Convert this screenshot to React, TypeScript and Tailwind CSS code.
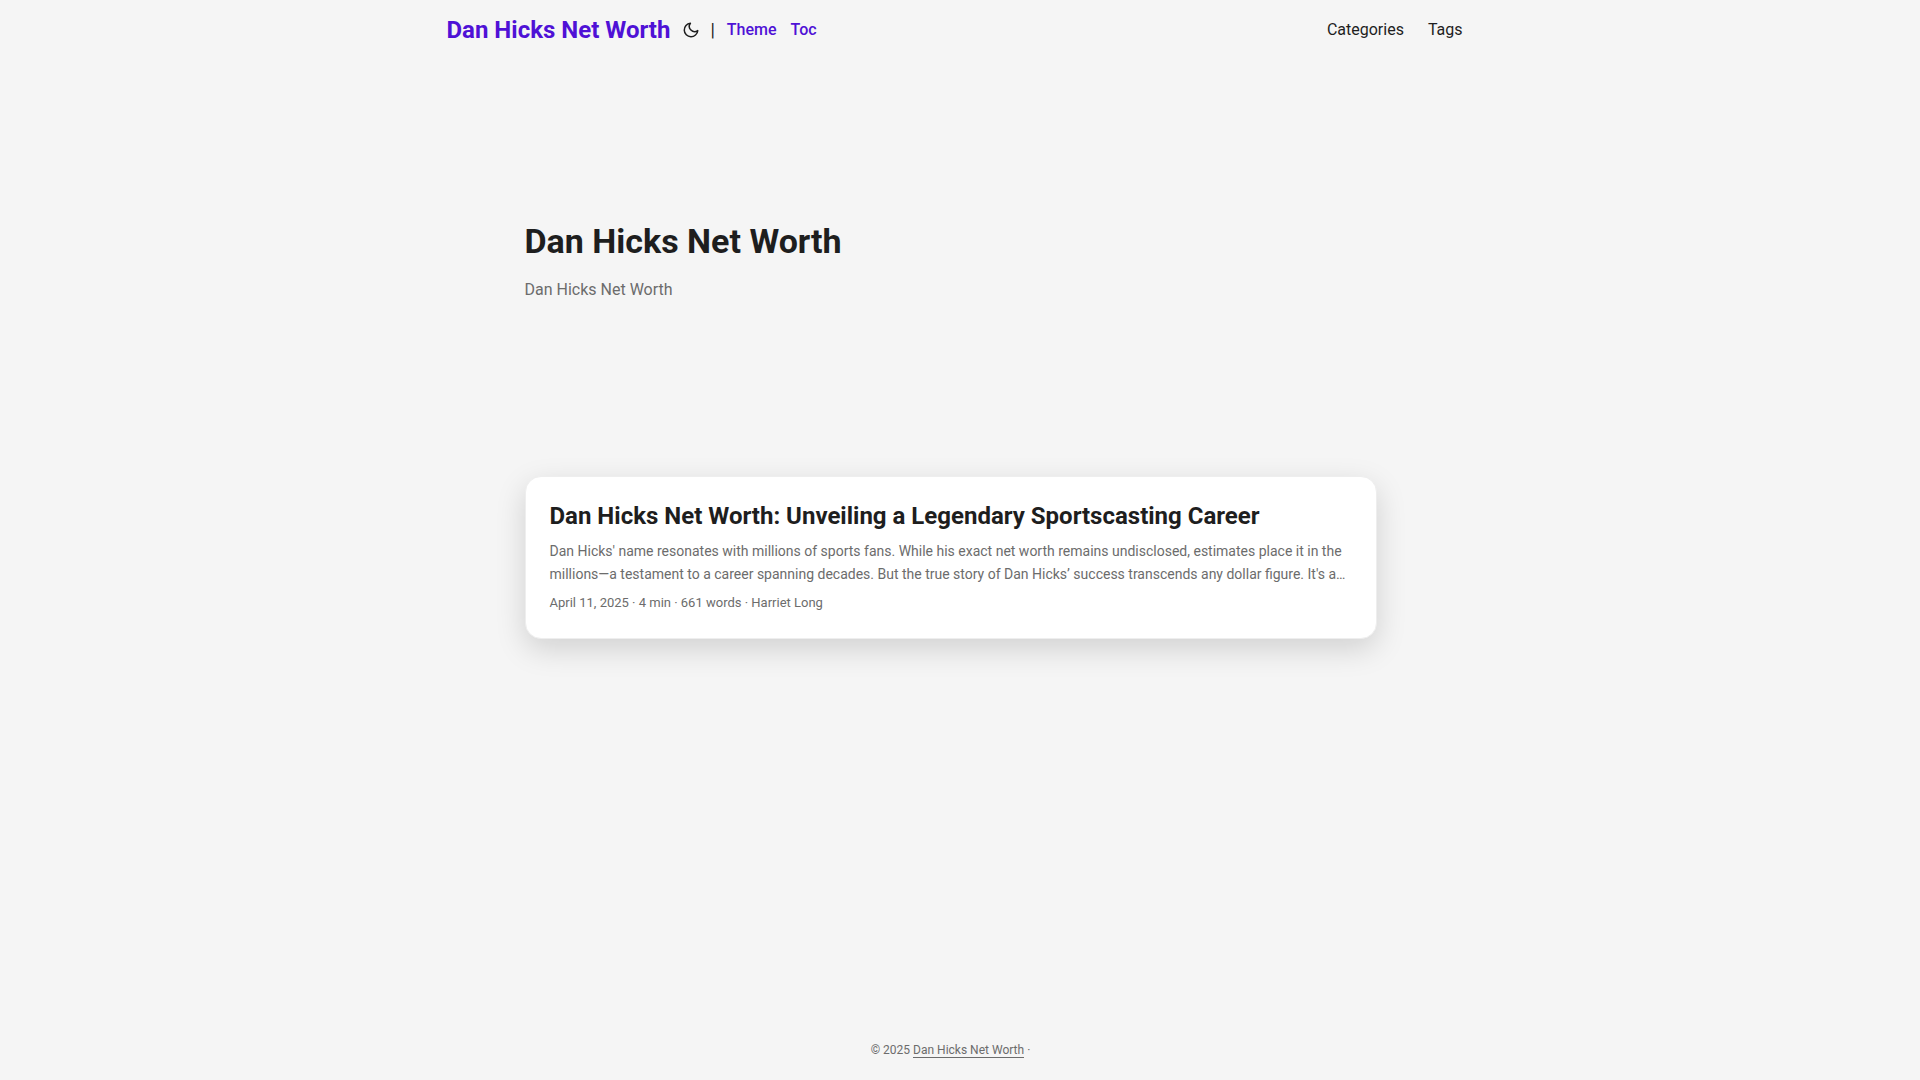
const menu = ["Categories", "Tags"];
const switches = ["Theme", "Toc"];

const posts = [
  {
    title: "Dan Hicks Net Worth: Unveiling a Legendary Sportscasting Career",
    summary:
      "Dan Hicks' name resonates with millions of sports fans. While his exact net worth remains undisclosed, estimates place it in the millions—a testament to a career spanning decades. But the true story of Dan Hicks’ success transcends any dollar figure. It's a…",
    meta: ["April 11, 2025", "4 min", "661 words", "Harriet Long"],
  },
];

function MoonIcon() {
  return (
    <svg
      className="h-[18px] w-[26px]"
      viewBox="0 0 24 24"
      fill="none"
      stroke="currentColor"
      strokeWidth="2"
      strokeLinecap="round"
      strokeLinejoin="round"
      aria-hidden="true"
    >
      <path d="M21 12.79A9 9 0 1 1 11.21 3 7 7 0 0 0 21 12.79z" />
    </svg>
  );
}

function Header() {
  return (
    <header>
      <nav className="mx-auto flex h-[60px] max-w-[1072px] items-center justify-between px-6">
        <div className="flex items-center pl-2">
          <a href="#" className="text-2xl font-bold text-[#4f11d6]">
            Dan Hicks Net Worth
          </a>
          <button type="button" aria-label="Toggle theme" className="ml-2">
            <MoonIcon />
          </button>
          <span className="ml-1.5 text-lg">|</span>
          <ul className="ml-3 flex gap-3.5 font-medium text-[#4f11d6]">
            {switches.map((s) => (
              <li key={s}>
                <a href="#">{s}</a>
              </li>
            ))}
          </ul>
        </div>
        <ul className="flex gap-6">
          {menu.map((m) => (
            <li key={m}>
              <a href="#">{m}</a>
            </li>
          ))}
        </ul>
      </nav>
    </header>
  );
}

export default function App() {
  return (
    <div className="flex min-h-screen flex-col bg-[#f5f5f5] pr-[19px] font-['Roboto',sans-serif] text-base text-[#1e1e1e]">
      <Header />

      <main className="mx-auto w-full max-w-[900px] grow p-6">
        <article className="mt-6 mb-12 flex min-h-80 flex-col justify-center">
          <h1 className="text-[34px] leading-[44px] font-bold">Dan Hicks Net Worth</h1>
          <p className="my-3.5 leading-[26px] text-[#6c6c6c]">Dan Hicks Net Worth</p>
        </article>

        {posts.map((post) => (
          <article
            key={post.title}
            className="rounded-2xl border border-[#eeeeee] bg-white p-6 shadow-[0_10px_30px_rgba(0,0,0,0.15)]"
          >
            <h2 className="text-2xl leading-[31px] font-bold">
              <a href="#">{post.title}</a>
            </h2>
            <p className="mt-2 text-sm leading-[23px] text-[#6c6c6c]">{post.summary}</p>
            <footer className="mt-1.5 text-[13px] leading-[22px] text-[#6c6c6c]">
              {post.meta.join(" · ")}
            </footer>
          </article>
        ))}
      </main>

      <footer className="flex h-[60px] items-center justify-center text-xs leading-6 text-[#6c6c6c]">
        <p>
          © 2025{" "}
          <a href="#" className="border-b border-[#6c6c6c]">
            Dan Hicks Net Worth
          </a>{" "}
          ·
        </p>
      </footer>
    </div>
  );
}
